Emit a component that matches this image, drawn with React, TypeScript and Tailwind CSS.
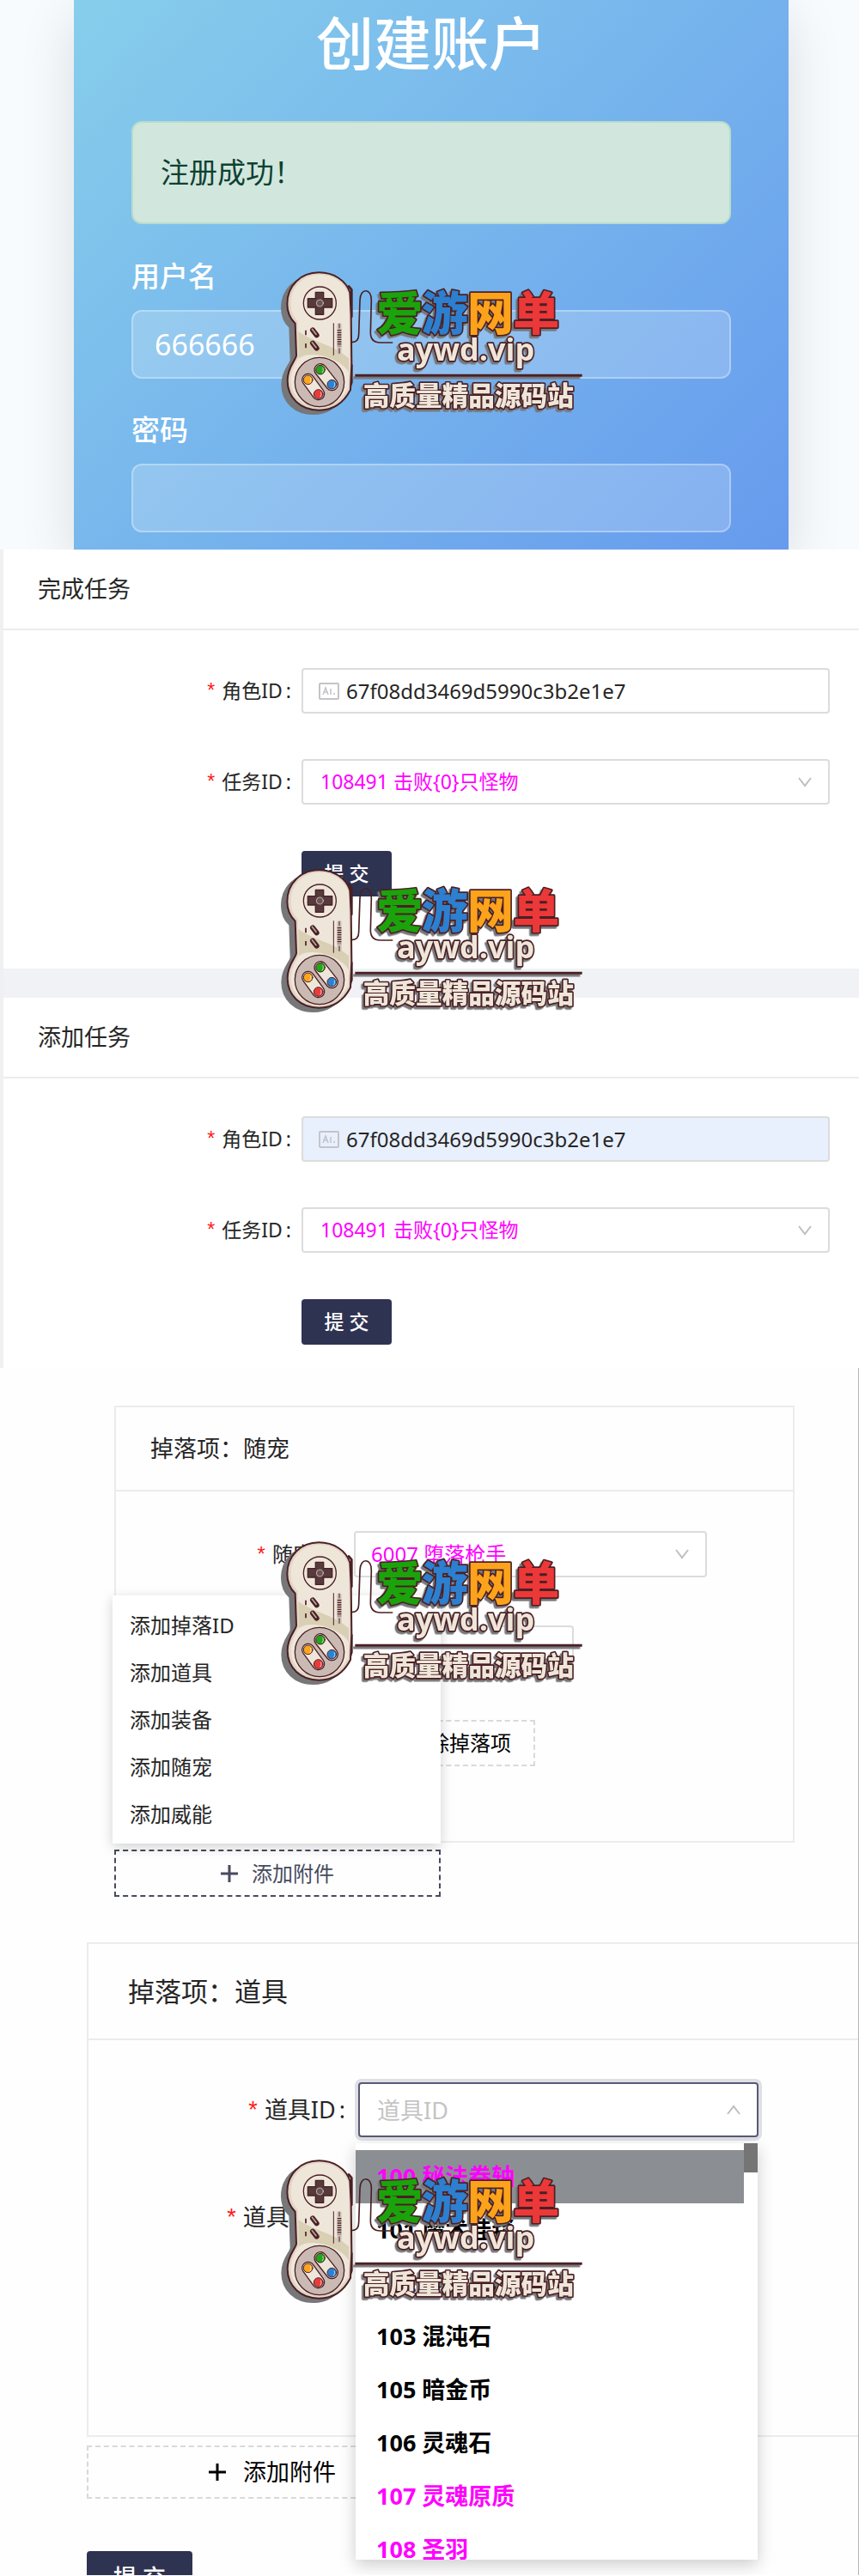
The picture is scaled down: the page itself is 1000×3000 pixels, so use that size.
import { useState, type ReactNode } from 'react'

const ROLE_ID = '67f08dd3469d5990c3b2e1e7'
const MENU_ITEMS = ['添加掉落ID', '添加道具', '添加装备', '添加随宠', '添加威能']

const OPTIONS = [
  { label: '100 秘法卷轴', rare: true },
  { label: '101 魔术挂毯', rare: false },
  { label: '102 混沌水晶', rare: false },
  { label: '103 混沌石', rare: false },
  { label: '105 暗金币', rare: false },
  { label: '106 灵魂石', rare: false },
  { label: '107 灵魂原质', rare: true },
  { label: '108 圣羽', rare: true },
]

const LETTERS = [
  { char: '爱', x: 415, fill: '#1ba30b' },
  { char: '游', x: 572, fill: '#2d7fcf' },
  { char: '网', x: 732, fill: '#fda31b' },
  { char: '单', x: 892, fill: '#ec3838' },
]

const INK = '#4a2024'
const CREAM = '#efe6da'
const BODY =
  'M214 52C150 52 103 98 103 162C103 190 112 212 131 230L135 342C134 358 104 380 104 430C104 490 150 533 214 533C262 533 300 508 324 462L328 370L326 200L322 122C308 80 266 52 214 52Z'

function Controller() {
  return (
    <g stroke={INK} strokeWidth="4" strokeLinecap="round" strokeLinejoin="round">
      <path d={BODY} transform="translate(-20 14)" fill="#77777a" stroke="#77777a" />
      <path d="M318 100L328 112V206M328 376V436L316 468" fill="none" strokeWidth="8" />
      <path d={BODY} fill="#e3d4c6" strokeWidth="6" />
      <path
        d="M216 60C158 60 116 102 116 160C116 190 124 206 140 222L144 350C130 374 116 396 116 430C116 482 158 522 214 522C256 522 292 500 316 456L320 380L318 130C302 86 262 60 216 60Z"
        fill={CREAM}
        stroke="none"
      />
      <path d="M142 258C200 300 260 300 318 352V400C290 350 180 320 144 352Z" fill="#d9cfb4" stroke="none" />
      <circle cx="217" cy="159" r="57" fill={CREAM} />
      <path d="M202 121H230V143H260V174H230V199H202V174H175V143H202Z" fill="#553b3d" />
      <circle cx="217" cy="159" r="12" fill="#6f5354" stroke={CREAM} strokeWidth="2" />
      <path d="M192 253L206 271M192 299L206 317" strokeWidth="18" />
      <path d="M190 250L204 268M190 296L204 314" stroke="#b7aaa3" strokeWidth="5" />
      <path d="M168 254V271M168 300V316" strokeWidth="5" strokeLinecap="butt" />
      <path d="M265 230V340" strokeWidth="3" />
      <rect x="277" y="228" width="16" height="110" rx="8" fill="#d0c3bb" stroke="none" />
      <path d="M285 232V246M285 318V334" strokeWidth="3" />
      <path d="M285 252V310" strokeWidth="14" strokeDasharray="4 4" strokeLinecap="butt" />
      <circle cx="216" cy="435" r="86" fill="#cbbab4" />
      <path d="M219 392L259 443M176 427L212 476" strokeWidth="46" />
      <path d="M219 392L259 443M176 427L212 476" stroke={CREAM} strokeWidth="38" />
      <g strokeWidth="3">
        <circle cx="219" cy="392" r="16" fill="#23a51c" />
        <circle cx="259" cy="443" r="16" fill="#2b82d3" />
        <circle cx="176" cy="427" r="16" fill="#fba61e" />
        <circle cx="212" cy="477" r="16" fill="#ea3b3c" />
      </g>
      <path
        d="M226 402Q232 394 228 386M266 453Q272 445 268 437M183 437Q189 429 185 421M219 487Q225 479 221 471"
        stroke="#fff"
        strokeWidth="2"
        fill="none"
      />
      <path
        d="M328 296C345 296 353 286 353 268L357 150C357 104 399 106 397 150L394 262C394 288 408 297 428 297H470"
        fill="none"
        strokeWidth="5"
      />
    </g>
  )
}

function Brand({ className }: { className: string }) {
  return (
    <svg
      viewBox="60 30 1080 540"
      className={`pointer-events-none absolute left-80 z-20 h-[180px] w-[360px] ${className}`}
    >
      <Controller />
      <g
        stroke={INK}
        strokeWidth="10"
        strokeLinejoin="round"
        className="font-['Noto_Sans_CJK_SC',sans-serif] font-black drop-shadow-[-7px_8px_0_#77777a] [paint-order:stroke]"
      >
        {LETTERS.map((l) => (
          <text key={l.char} x={l.x} y="256" fontSize="162" fill={l.fill}>{l.char}</text>
        ))}
        <text x="486" y="360" fontSize="108" fill={CREAM} className="font-['Open_Sans','Noto_Sans',sans-serif] font-bold">
          aywd.vip
        </text>
        <path d="M340 412H1133" strokeWidth="9" />
        <text x="368" y="517" fontSize="92" fill={CREAM}>高质量精品源码站</text>
      </g>
    </svg>
  )
}

function Chevron({ up = false }: { up?: boolean }) {
  return (
    <svg
      viewBox="0 0 18 12"
      className={`pointer-events-none absolute top-1/2 right-5 h-3 w-[18px] -translate-y-1/2 ${up ? 'rotate-180' : ''}`}
      fill="none"
      stroke="#bfbfbf"
      strokeWidth="2"
    >
      <path d="M2 1l7 9 7-9" />
    </svg>
  )
}

function IdCardIcon() {
  return (
    <svg viewBox="0 0 24 20" className="h-5 w-6 shrink-0" fill="none" stroke="#c4c4c8" strokeWidth="2">
      <rect x="1" y="1" width="22" height="18" rx="1" />
      <path d="M5 14l3-8 3 8M6 11h4M14 7v7M17 13h2" strokeWidth="1.5" />
    </svg>
  )
}

function PlusIcon() {
  return (
    <svg viewBox="0 0 20 20" className="size-5" fill="none" stroke="currentColor" strokeWidth="3">
      <path d="M10 0v20M0 10h20" />
    </svg>
  )
}

function Required({ htmlFor, children, className = '' }: { htmlFor: string; children: ReactNode; className?: string }) {
  return (
    <label htmlFor={htmlFor} className={`flex shrink-0 items-center justify-end whitespace-nowrap ${className}`}>
      <span className="mr-2 font-['Liberation_Sans',sans-serif] text-[#ff1a1a]">*</span>
      <span>{children}</span>
      <span className="ml-1">:</span>
    </label>
  )
}

function TaskCard({ id, title, filled, className }: { id: string; title: string; filled?: boolean; className: string }) {
  const [role, setRole] = useState(ROLE_ID)
  return (
    <section className="bg-white">
      <h2 className="border-b-2 border-[#ececec] px-10 py-[26px] text-[27px] leading-10">{title}</h2>
      <form className={`flex flex-col pt-11 pr-[34px] text-[23px] ${className}`}>
        <div className="mb-[53px] flex items-center">
          <Required htmlFor={`${id}-role`} className="w-[335px]">角色ID</Required>
          <div
            className={`ml-3 flex h-[53px] flex-1 items-center gap-2 rounded-sm border-2 border-[#dcdcdc] px-[18px] ${filled ? 'bg-[#e8f0fe]' : 'bg-white'}`}
          >
            <IdCardIcon />
            <input
              id={`${id}-role`}
              value={role}
              onChange={(e) => setRole(e.target.value)}
              className="min-w-0 flex-1 bg-transparent text-[24px] outline-none"
            />
          </div>
        </div>
        <div className="mb-[54px] flex items-center">
          <Required htmlFor={`${id}-task`} className="w-[335px]">任务ID</Required>
          <div className="relative ml-3 flex-1">
            <select
              id={`${id}-task`}
              className="block h-[53px] w-full appearance-none rounded-sm border-2 border-[#dcdcdc] bg-white px-5 text-[#ff00ff]"
            >
              <option>108491 击败{'{0}'}只怪物</option>
            </select>
            <Chevron />
          </div>
        </div>
        <button type="button" className="ml-[347px] h-[53px] w-[105px] rounded-sm bg-[#2f3352] font-medium text-white">
          提 交
        </button>
      </form>
    </section>
  )
}

function RegisterPanel() {
  const field =
    'mb-[35px] h-20 w-full rounded-xl border-2 border-white/30 bg-white/20 px-[25px] text-[34px] text-white outline-none'
  return (
    <section className="relative flex h-[640px] justify-center overflow-hidden bg-[#f8fbfe]">
      <form className="ml-1 w-[832px] bg-linear-135 from-[#87ceeb] to-[#6495ed] to-110% px-[67px] text-[33px] text-white shadow-[0_20px_60px_rgba(0,0,0,0.12)]">
        <h1 className="mb-[41px] text-center text-[67px] leading-[100px] font-medium">创建账户</h1>
        <div role="alert" className="mb-9 rounded-xl border-2 border-[#badbcc] bg-[#d1e7dd] px-8 py-[31px] leading-[54px] text-[#0f4132]">
          注册成功！
        </div>
        <label htmlFor="username" className="mb-3.5 block leading-[50px] font-medium">用户名</label>
        <input id="username" defaultValue="666666" className={field} />
        <label htmlFor="password" className="mb-3.5 block leading-[50px] font-medium">密码</label>
        <input id="password" type="password" className={field} />
      </form>
      <Brand className="top-[310px]" />
    </section>
  )
}

function PetDrop() {
  return (
    <section className="relative border-r border-[#b5b5b5] bg-[#fefefe] pt-11 pr-[74px] pl-[133px] text-[24px]">
      <div className="h-[509px] border-2 border-[#ececec]">
        <h2 className="border-b-2 border-[#ececec] px-10 py-7 text-[27px] leading-10">掉落项：随宠</h2>
        <div className="mt-[46px] flex items-center">
          <Required htmlFor="pet" className="w-[266px]">随宠ID</Required>
          <div className="relative ml-[11px] w-[411px]">
            <select
              id="pet"
              className="block h-[54px] w-full appearance-none rounded-sm border-2 border-[#dcdcdc] bg-white px-[18px] text-[#ff00ff]"
            >
              <option>6007 堕落枪手</option>
            </select>
            <Chevron />
          </div>
        </div>
        <input
          aria-label="数量"
          className="mt-14 ml-[277px] block h-[54px] w-[256px] rounded-sm border-2 border-[#dcdcdc] bg-white"
        />
        <button
          type="button"
          className="mt-14 ml-[277px] h-[54px] w-[211px] border-2 border-dashed border-[#d9d9d9] pr-[26px] text-right text-black"
        >
          删除掉落项
        </button>
      </div>
      <ul className="absolute top-[265px] left-[131px] z-10 w-[382px] bg-white py-[7px] shadow-[0_4px_14px_rgba(0,0,0,0.18)]">
        {MENU_ITEMS.map((item) => (
          <li key={item}>
            <button type="button" className="h-[55px] w-full px-5 text-left">{item}</button>
          </li>
        ))}
      </ul>
      <button
        type="button"
        className="mt-2 flex h-[55px] w-[380px] items-center justify-center gap-4 border-2 border-dashed border-[#474b5e] text-[#474b5e]"
      >
        <PlusIcon />
        添加附件
      </button>
      <Brand className="top-[196px]" />
    </section>
  )
}

function ItemDrop() {
  return (
    <section className="relative border-r border-[#b5b5b5] bg-[#fefefe] pt-[53px] pl-[101px] text-[27px]">
      <div className="h-[576px] border-2 border-r-0 border-[#ececec]">
        <h2 className="border-b-2 border-[#ececec] px-[46px] py-[31px] text-[31px] leading-[48px]">掉落项：道具</h2>
        <div className="mt-[49px] flex items-center">
          <Required htmlFor="item" className="w-[299px]">道具ID</Required>
          <div className="relative ml-[15px] w-[466px]">
            <input
              id="item"
              placeholder="道具ID"
              className="block h-16 w-full rounded-sm border-2 border-[#5a5878] bg-white px-5 shadow-[0_0_0_4px_rgba(47,51,82,0.15)] outline-none placeholder:text-[#c4c4c4]"
            />
            <Chevron up />
            <div className="absolute top-[71px] -left-[3px] z-10 flex h-[485px] w-[468px] overflow-hidden bg-white pt-2 shadow-[0_6px_18px_rgba(0,0,0,0.2)]">
              <ul role="listbox" aria-label="道具" className="flex-1 font-bold">
                {OPTIONS.map((o, i) => (
                  <li
                    key={o.label}
                    role="option"
                    aria-selected={i === 0}
                    className={`h-[62px] px-6 leading-[62px] ${o.rare ? 'text-[#ff00ff]' : 'text-black'} ${i === 0 ? 'bg-[#8b8f94]' : ''}`}
                  >
                    {o.label}
                  </li>
                ))}
              </ul>
              <div className="-mt-2 h-[34px] w-4 bg-[#757575]" />
            </div>
          </div>
        </div>
        <div className="mt-[73px] flex h-[40px] items-center">
          <Required htmlFor="amount" className="w-[299px]">道具数量</Required>
          <input id="amount" className="ml-[15px] h-16 w-[290px] rounded-sm border-2 border-[#dcdcdc]" />
        </div>
      </div>
      <button
        type="button"
        className="mt-2.5 flex h-[62px] w-[432px] items-center justify-center gap-5 border-2 border-dashed border-[#d9d9d9] text-black"
      >
        <PlusIcon />
        添加附件
      </button>
      <div className="mt-[61px] h-7 overflow-hidden">
        <button type="button" className="h-[62px] w-[123px] rounded-sm bg-[#2f3352] font-medium text-white">
          提 交
        </button>
      </div>
      <Brand className="top-[300px]" />
    </section>
  )
}

export default function App() {
  return (
    <main className="bg-white font-['Noto_Sans','Noto_Sans_CJK_SC',sans-serif] text-[#262626]">
      <RegisterPanel />
      <div className="relative border-l-4 border-[#f0f0f2]">
        <TaskCard id="finish" title="完成任务" className="pb-[84px]" />
        <div className="h-[34px] bg-[#f0f2f5]" />
        <TaskCard id="add" title="添加任务" filled className="pb-[27px]" />
        <Brand className="top-[366px] -ml-1" />
      </div>
      <PetDrop />
      <ItemDrop />
    </main>
  )
}
